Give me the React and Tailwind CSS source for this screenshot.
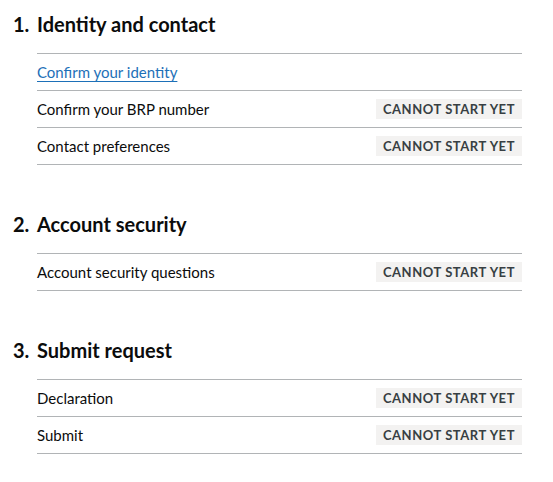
import React from 'react';

const sections = [
    {
        title: 'Identity and contact',
        items: [
            { name: 'Confirm your identity', link: true },
            { name: 'Confirm your BRP number' },
            { name: 'Contact preferences' },
        ],
    },
    {
        title: 'Account security',
        items: [{ name: 'Account security questions' }],
    },
    {
        title: 'Submit request',
        items: [{ name: 'Declaration' }, { name: 'Submit' }],
    },
];

const TaskRow = ({ item }) => (
    <li className="flex items-center justify-between h-[37px] border-b border-[#b1b4b6]">
        {item.link ? (
            <a href="#" className="text-[15px] text-[#1d70b8] underline underline-offset-[3px] decoration-1">
                {item.name}
            </a>
        ) : (
            <span className="text-[15px] text-[#0b0c0c]">{item.name}</span>
        )}
        {!item.link && (
            <strong className="bg-[#f3f2f1] text-[#383f43] text-[13px] font-bold tracking-[0.55px] uppercase leading-[20px] px-[7px]">
                Cannot start yet
            </strong>
        )}
    </li>
);

const App = () => {
    return (
        <div
            className="w-full min-h-screen bg-white pt-[12px] pl-[13px] pr-[31px]"
            style={{ fontFamily: 'Lato, "Liberation Sans", Arial, sans-serif' }}
        >
            <ol>
                {sections.map((section, i) => (
                    <li key={section.title} className="mb-[47px]">
                        <h2 className="flex text-[20px] font-bold leading-[24px] text-[#0b0c0c] mb-[17px]">
                            <span className="w-[24px]">{i + 1}.</span>
                            <span>{section.title}</span>
                        </h2>
                        <ul className="ml-[24px] border-t border-[#b1b4b6]">
                            {section.items.map((item) => (
                                <TaskRow key={item.name} item={item} />
                            ))}
                        </ul>
                    </li>
                ))}
            </ol>
        </div>
    );
};

export default App;
